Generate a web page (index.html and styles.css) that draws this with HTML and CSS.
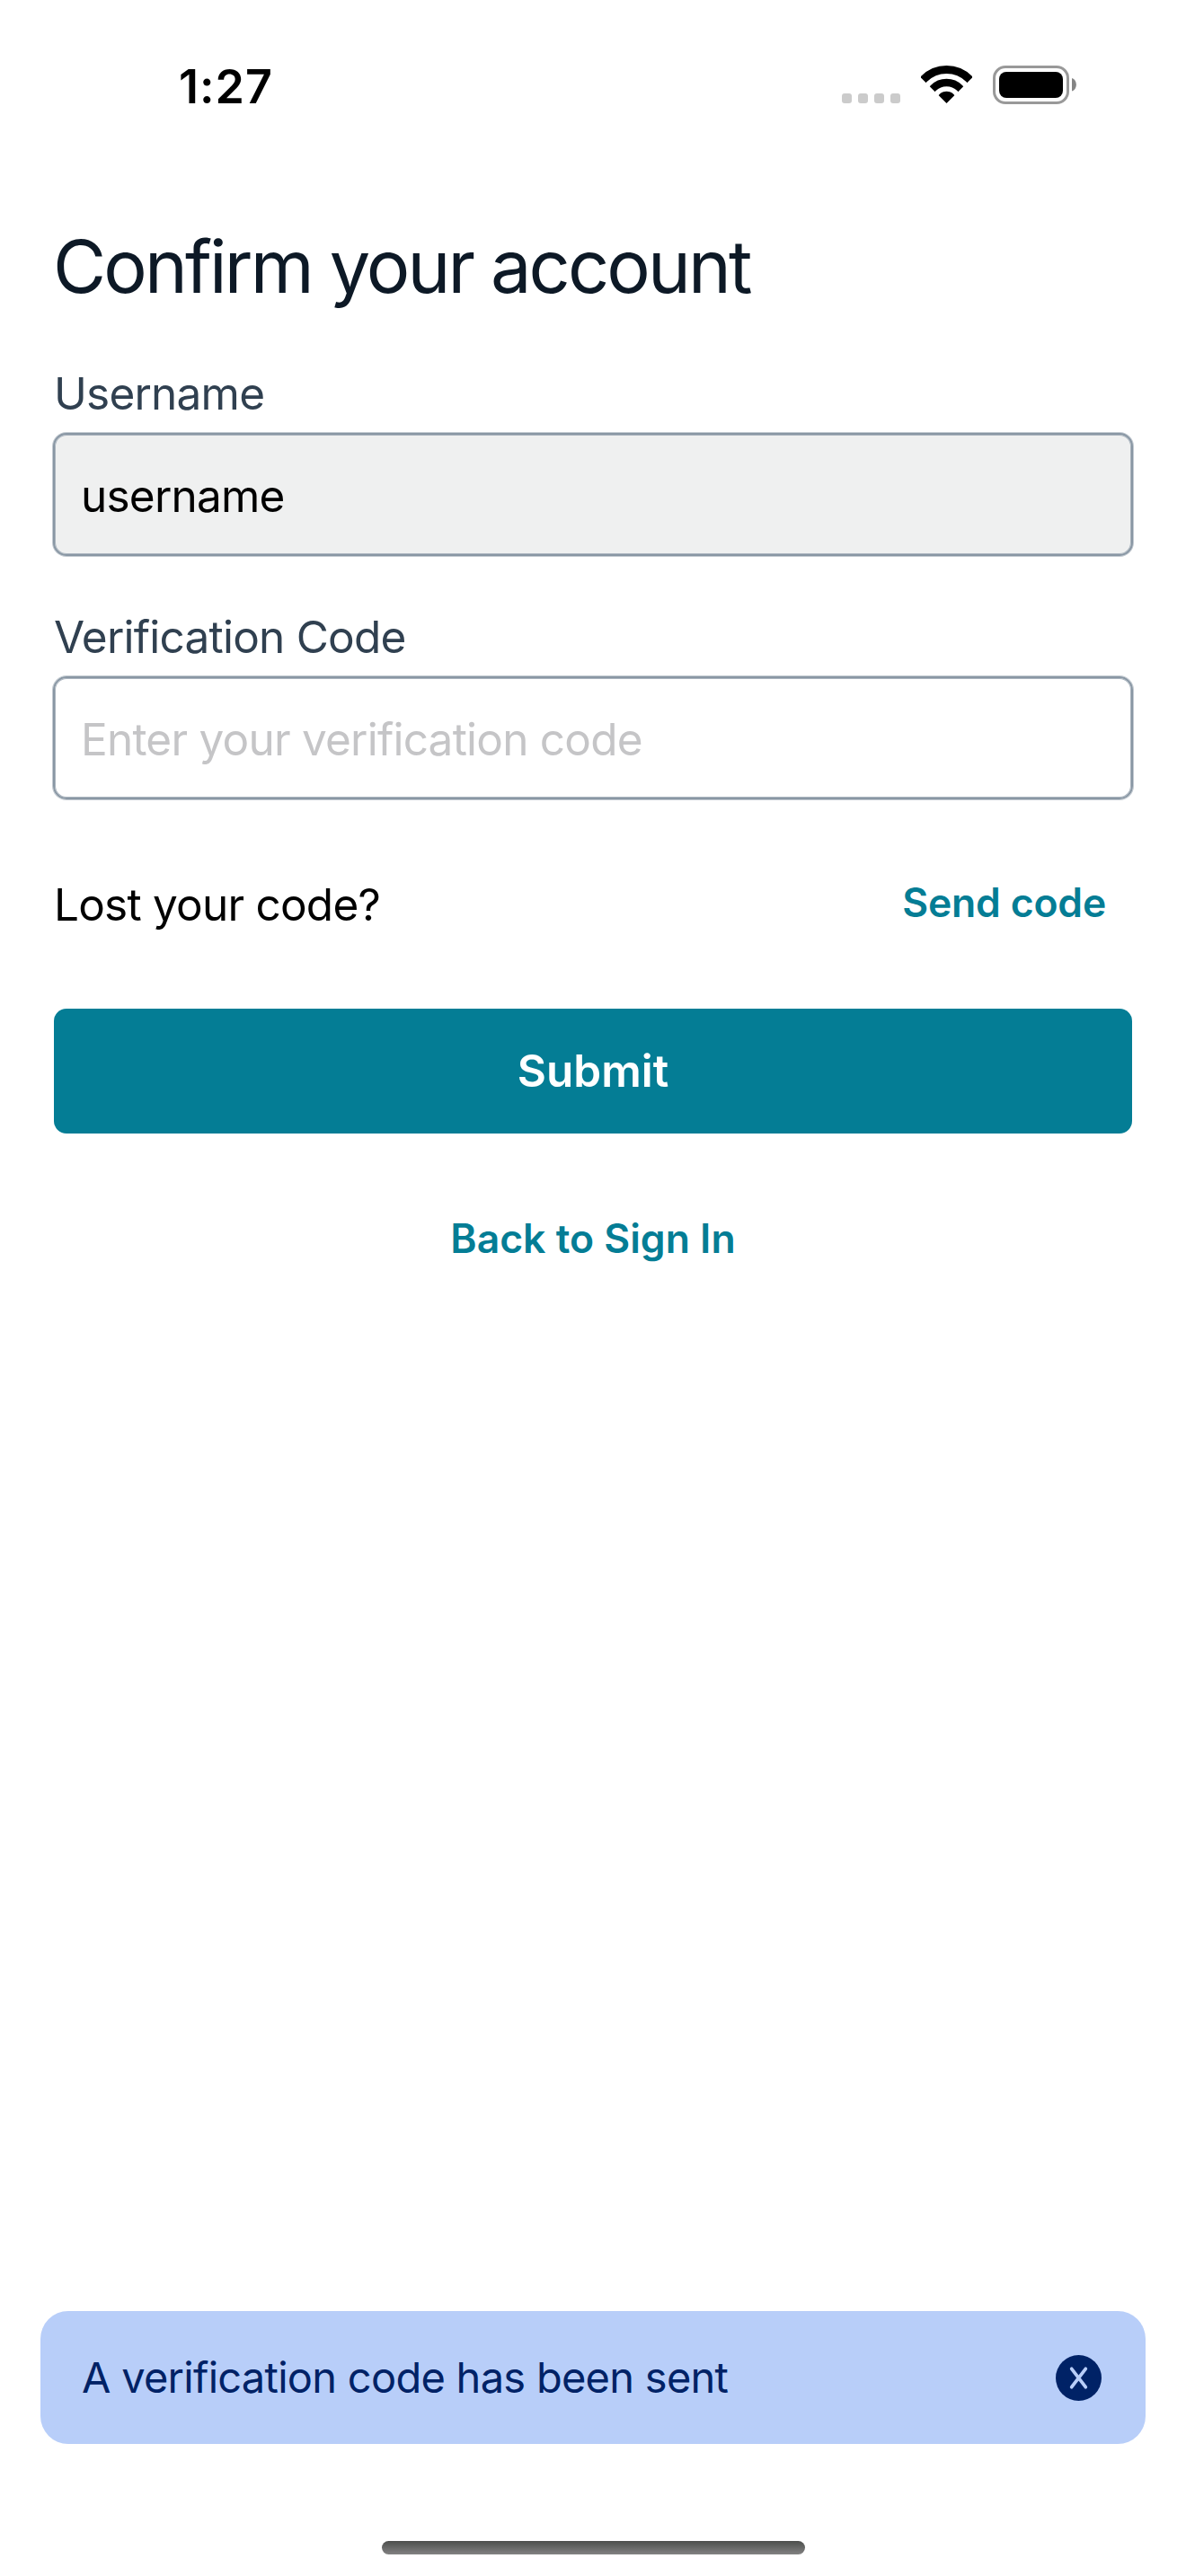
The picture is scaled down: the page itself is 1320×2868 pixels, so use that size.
FILE: index.html
```
<!DOCTYPE html>
<html lang="en">
<head>
  <meta charset="utf-8">
  <title>Confirm your account</title>
  <link rel="stylesheet" href="styles.css">
</head>
<body>
  <div class="screen">
    <header class="status">
      <span class="status-time">1:27</span>
      <div class="status-icons">
        <svg width="65" height="11" viewBox="0 0 65 11" fill="#cbcbcb" aria-hidden="true">
          <rect width="11" height="11" rx="3"/>
          <rect x="18" width="11" height="11" rx="3"/>
          <rect x="36" width="11" height="11" rx="3"/>
          <rect x="54" width="11" height="11" rx="3"/>
        </svg>
        <svg width="57" height="42" viewBox="0 0 57 42" aria-hidden="true">
          <defs>
            <clipPath id="wedge"><path d="M28.5 42 L-14 -0.5 L-14 -10 H71 V-0.5 Z"/></clipPath>
          </defs>
          <g clip-path="url(#wedge)">
            <circle cx="28.5" cy="40" r="35.5" fill="none" stroke="#000" stroke-width="9"/>
            <circle cx="28.5" cy="40" r="21" fill="none" stroke="#000" stroke-width="8.4"/>
            <circle cx="28.5" cy="40" r="11.2"/>
          </g>
        </svg>
        <svg width="93" height="43" viewBox="0 0 93 43" aria-hidden="true">
          <rect x="1.5" y="1.5" width="82" height="40" rx="12.5" fill="none" stroke="#999" stroke-width="3"/>
          <rect x="7" y="7" width="71" height="29" rx="8"/>
          <path d="M88 14 C94.5 16 94.5 26.5 88 28.5 Z" fill="#858585"/>
        </svg>
      </div>
    </header>

    <main class="form">
      <h1 class="title">Confirm your account</h1>

      <div class="group">
        <span class="label">Username</span>
        <div class="field field-disabled">username</div>
      </div>

      <div class="group">
        <span class="label">Verification Code</span>
        <div class="field field-empty">Enter your verification code</div>
      </div>

      <div class="resend">
        <span class="resend-text">Lost your code?</span>
        <a class="link link-send">Send code</a>
      </div>

      <div class="submit">Submit</div>
      <a class="link link-back">Back to Sign In</a>
    </main>

    <div class="toast">
      <span>A verification code has been sent</span>
      <svg width="51" height="51" viewBox="0 0 51 51" aria-hidden="true">
        <circle cx="25.5" cy="25.5" r="25.5" fill="#002266"/>
        <path d="M17.7 15.3 L33.3 35.7 M33.3 15.3 L17.7 35.7" stroke="#b8cef9" stroke-width="3.7" stroke-linecap="round"/>
      </svg>
    </div>

    <div class="home-bar"></div>
  </div>
</body>
</html>
```
FILE: styles.css
```
* { box-sizing: border-box; }

body {
  margin: 0;
  background: #fff;
  font-family: Inter, "Liberation Sans", sans-serif;
  color: #000;
}

.screen {
  display: flex;
  flex-direction: column;
  width: 1320px;
  height: 2868px;
}

.status {
  display: flex;
  justify-content: space-between;
  padding: 64px 122px 0 199px;
  height: 247px;
}

.status-time {
  font-size: 52px;
  font-weight: 600;
  line-height: 65px;
  letter-spacing: 1px;
}

.status-icons {
  display: flex;
  align-items: flex-end;
  gap: 23px;
  height: 52px;
}

.status-icons svg { margin-bottom: 1px; }
.status-icons svg:last-child { margin-bottom: 0; }

.form {
  display: flex;
  flex-direction: column;
  padding: 0 59px;
}

.title {
  margin: 0 0 60px;
  font-size: 81px;
  font-weight: 400;
  line-height: 101px;
  letter-spacing: -2.88px;
  color: #0d1926;
}

.group {
  display: flex;
  flex-direction: column;
  gap: 14px;
  margin-bottom: 60px;
}

.label,
.field,
.resend-text {
  font-size: 49.5px;
  letter-spacing: -0.78px;
}

.label {
  padding-left: 1px;
  line-height: 60px;
  color: #304050;
}

.field {
  height: 137px;
  padding: 2px 29px 0;
  border: 2px solid #8997a4;
  border-radius: 15px;
  box-shadow: 0 0 0 1px #c3cad1, inset 0 0 0 1px #aab4be;
  line-height: 133px;
}

.field-disabled { background: #eff0f0; }
.field-empty { color: #c5c5c7; }

.resend {
  display: flex;
  justify-content: space-between;
  margin: 27px 30px 86px 1px;
}

.resend-text { line-height: 60px; }

.link {
  font-size: 44.5px;
  font-weight: 600;
  line-height: 57px;
  color: #047d95;
}

.link-send { letter-spacing: -0.2px; }

.submit {
  height: 139px;
  margin: 0 1px 89px;
  border-radius: 14px;
  background: #047d95;
  color: #fff;
  font-size: 49.5px;
  font-weight: 600;
  line-height: 139px;
  text-align: center;
}

.link-back { text-align: center; }

.toast {
  display: flex;
  align-items: center;
  justify-content: space-between;
  height: 148px;
  margin: auto 45px 108px;
  padding: 0 49px 0 46px;
  border-radius: 31px;
  background: #b8cef9;
  color: #002266;
  font-size: 47px;
  line-height: 148px;
  letter-spacing: -0.73px;
}

.home-bar {
  align-self: center;
  width: 471px;
  height: 15px;
  margin-bottom: 24px;
  border-radius: 8px;
  background: linear-gradient(#4c4e4c, #828282);
}
```
